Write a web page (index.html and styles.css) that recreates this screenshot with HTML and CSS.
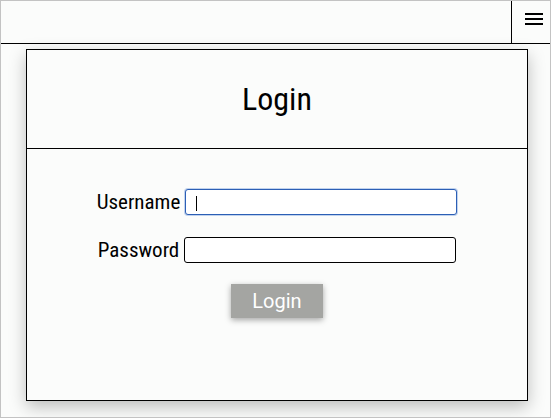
FILE: index.html
```html
<!DOCTYPE html>
<html lang="en">
<head>
<meta charset="utf-8">
<title>Login</title>
<link rel="stylesheet" href="styles.css">
</head>
<body>
<div class="frame">
  <header class="topbar">
    <div class="topbar-space"></div>
    <button class="menu-btn" type="button" aria-label="Menu">
      <svg class="menu-icon" width="18" height="12" viewBox="0 0 18 12" aria-hidden="true">
        <rect x="0" y="0" width="18" height="2" fill="#000"/>
        <rect x="0" y="5" width="18" height="2" fill="#000"/>
        <rect x="0" y="10" width="18" height="2" fill="#000"/>
      </svg>
    </button>
  </header>
  <main class="card">
    <div class="card-header">
      <h1 class="card-title">Login</h1>
    </div>
    <form class="card-body">
      <div class="field">
        <label class="field-label" for="username">Username</label>
        <span class="input-wrap">
          <input class="field-input is-focused" id="username" type="text">
          <span class="caret"></span>
        </span>
      </div>
      <div class="field">
        <label class="field-label" for="password">Password</label>
        <span class="input-wrap">
          <input class="field-input" id="password" type="password">
        </span>
      </div>
      <button class="login-btn" type="button">Login</button>
    </form>
  </main>
</div>
</body>
</html>
```
FILE: styles.css
```css
* { box-sizing: border-box; }
html, body { margin: 0; padding: 0; }
body {
  font-family: "Roboto Condensed", Roboto, "Liberation Sans", sans-serif;
  color: #000;
  background: #fbfcfb;
}
.frame {
  width: 551px;
  height: 418px;
  border: 1px solid #c3c3c3;
  background: #fbfcfb;
  display: flex;
  flex-direction: column;
  overflow: hidden;
}
.topbar {
  height: 43px;
  border-bottom: 1px solid #000;
  display: flex;
  flex-shrink: 0;
}
.topbar-space { flex: 1; }
.menu-btn {
  width: 39px;
  height: 42px;
  border: 0;
  border-left: 1px solid #000;
  background: transparent;
  padding: 12px 0 0 13px;
  margin: 0;
  display: flex;
  align-items: flex-start;
  justify-content: flex-start;
}
.menu-icon { display: block; }
.card {
  margin: 5px 0 0 25px;
  width: 502px;
  height: 352px;
  border: 1px solid #000;
  background: #fbfcfb;
  box-shadow: 0 6px 16px rgba(0, 0, 0, 0.25);
  display: flex;
  flex-direction: column;
}
.card-header {
  height: 99px;
  border-bottom: 1px solid #000;
  display: flex;
  align-items: center;
  justify-content: center;
}
.card-title {
  margin: 0;
  font-size: 32px;
  font-weight: 400;
  line-height: 1;
}
.card-body {
  margin: 0;
  padding-top: 40px;
  display: flex;
  flex-direction: column;
  align-items: center;
  gap: 22px;
}
.card-body .login-btn { margin-top: -1px; }
.field {
  display: flex;
  align-items: center;
  gap: 5px;
}
.field-label {
  font-size: 21px;
  line-height: 24px;
}
.input-wrap {
  position: relative;
  display: block;
}
.field-input {
  display: block;
  width: 272px;
  height: 26px;
  border: 1px solid #000;
  border-radius: 3px;
  background: #fff;
  padding: 0 6px;
  font: inherit;
  font-size: 16px;
  outline: none;
}
.field-input.is-focused {
  border-color: #2c5fb5;
  box-shadow: 0 0 0 1px rgba(120, 160, 220, 0.45);
}
.caret {
  position: absolute;
  left: 11px;
  top: 7px;
  width: 1px;
  height: 15px;
  background: #000;
}
.login-btn {
  width: 92px;
  height: 34px;
  border: 0;
  background: #a4a5a2;
  color: #fff;
  font-family: Roboto, "Liberation Sans", sans-serif;
  font-size: 20px;
  padding: 0;
  box-shadow: 0 2px 6px rgba(0, 0, 0, 0.35);
}
```
